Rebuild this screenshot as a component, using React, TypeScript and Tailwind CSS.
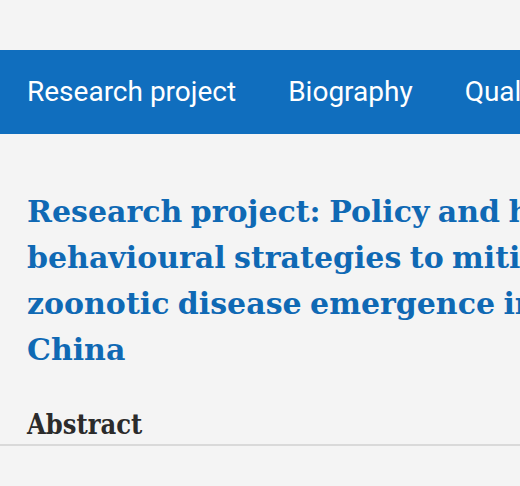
import React from "react";

const navItems = ["Research project", "Biography", "Qualifications"];

export default function App() {
  return (
    <div className="min-h-[486px] w-[520px] overflow-hidden bg-[#f4f4f4]">
      <div className="h-[50px]" />
      <nav className="flex h-[84px] items-center gap-[52px] whitespace-nowrap bg-[#106ebe] pl-[27px] font-['Roboto',sans-serif] text-[28px] text-white">
        {navItems.map((item) => (
          <span key={item}>{item}</span>
        ))}
      </nav>
      <main className="pt-[55px]">
        <h1 className="whitespace-nowrap pl-[27px] font-['DejaVu_Serif',serif] text-[30px] font-bold leading-[46px] text-[#0f69b4] [word-spacing:-2px]">
          Research project: Policy and household
          <br />
          behavioural strategies to mitigate
          <br />
          zoonotic disease emergence in
          <br />
          China
        </h1>
        <h2 className="mt-[34px] pl-[27px] font-['DejaVu_Serif',serif] text-[27px] font-bold leading-[36px] text-[#2b2b2b] font-stretch-condensed">
          Abstract
        </h2>
        <div className="mt-px h-[2px] bg-[#d9d9d9]" />
      </main>
    </div>
  );
}
